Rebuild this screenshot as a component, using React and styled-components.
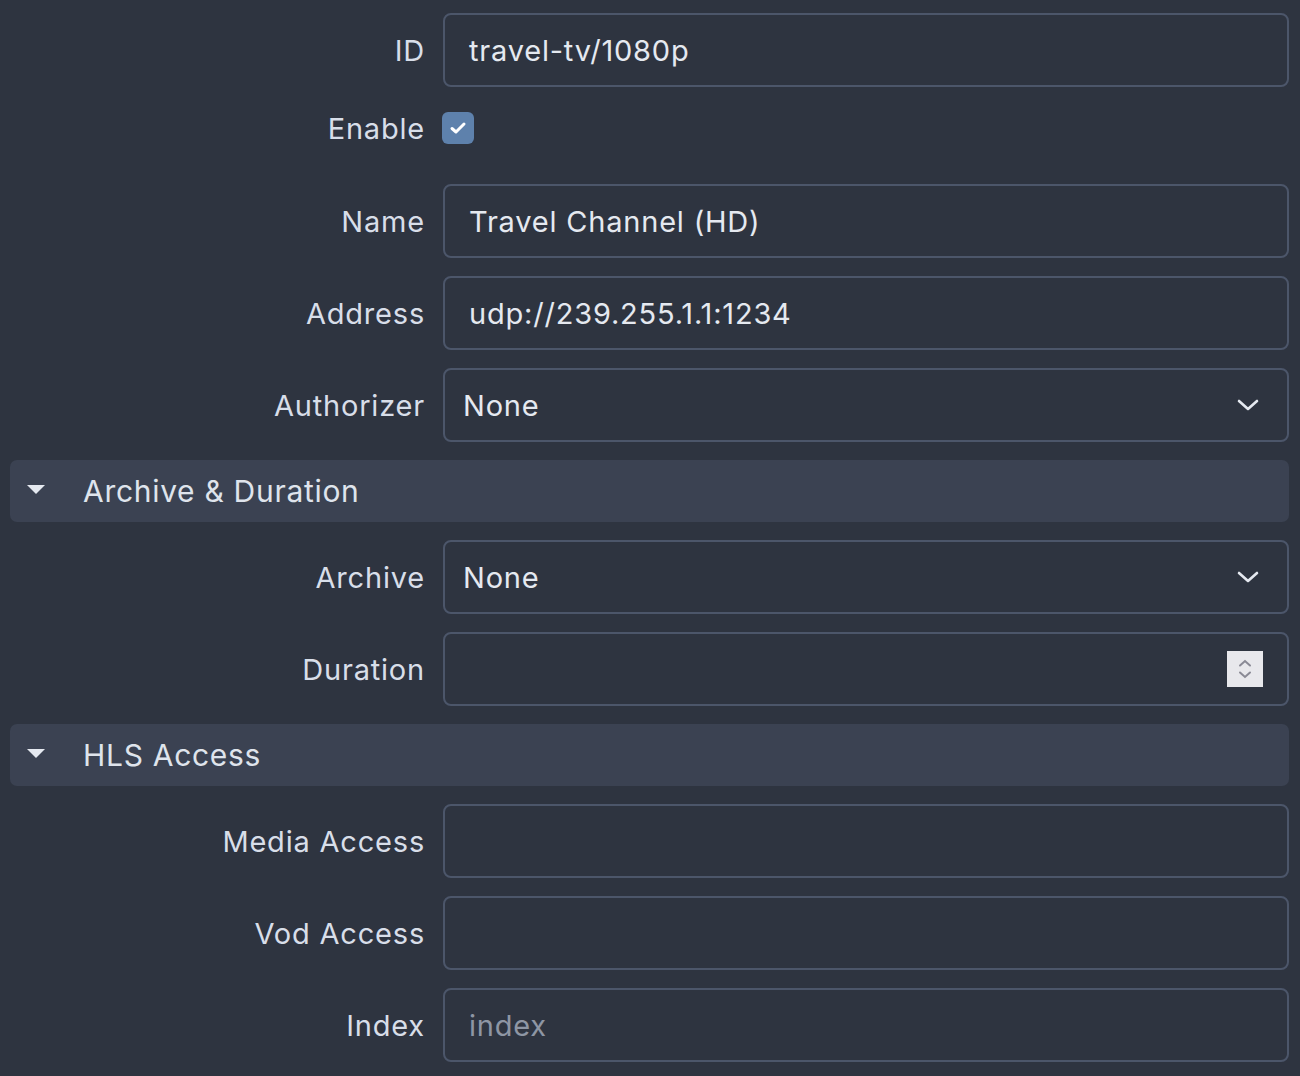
import React from 'react'
import styled, { createGlobalStyle } from 'styled-components'

const Global = createGlobalStyle`
  html, body {
    margin: 0;
    padding: 0;
    background: #2e3440;
  }
  body {
    font-family: Inter, "Noto Sans", "Liberation Sans", sans-serif;
    color: #d8dee9;
  }
`

const Page = styled.div`
  box-sizing: border-box;
  width: 1300px;
  min-height: 1076px;
  padding: 13px 11px 0 10px;
  display: flex;
  flex-direction: column;
  gap: 18px;
`

const Row = styled.div`
  display: grid;
  grid-template-columns: 415px 1fr;
  column-gap: 18px;
  align-items: center;
  height: ${p => (p.$compact ? '46px' : '74px')};
  margin-bottom: ${p => (p.$compact ? '15px' : '0')};
`

const Label = styled.label`
  text-align: right;
  font-size: 29px;
  color: #d8dee9;
  letter-spacing: 0.8px;
`

const Field = styled.div`
  box-sizing: border-box;
  height: 74px;
  border: 2px solid #4c566a;
  border-radius: 8px;
  display: flex;
  align-items: center;
  padding: ${p => (p.$select ? '0 28px 0 18px' : '0 24px')};
  font-size: 29px;
  color: ${p => (p.$placeholder ? '#8e96a4' : '#e5e9f0')};
  letter-spacing: 0.8px;
`

const FieldText = styled.span`
  flex: 1;
`

const Check = styled.span`
  width: 32px;
  height: 32px;
  border-radius: 6px;
  background: #5e81ac;
  display: flex;
  align-items: center;
  justify-content: center;
  margin-left: -1px;
`

const Spinner = styled.span`
  width: 36px;
  height: 36px;
  background: #e8e8ec;
  display: flex;
  flex-direction: column;
  align-items: center;
  justify-content: center;
  gap: 4px;
`

const Section = styled.div`
  height: 62px;
  background: #3b4252;
  border-radius: 7px;
  display: flex;
  align-items: center;
  padding-left: 17px;
  font-size: 30px;
  color: #dfe4ec;
  letter-spacing: 0.7px;
`

const Caret = styled.span`
  width: 0;
  height: 0;
  border-left: 9px solid transparent;
  border-right: 9px solid transparent;
  border-top: 9px solid #e5e9f0;
  margin-right: 38px;
  margin-top: -4px;
`

const Chevron = () => (
  <svg width="22" height="14" viewBox="0 0 22 14">
    <path d="M2 3 L11 11 L20 3" fill="none" stroke="#e5e9f0" strokeWidth="2.6" strokeLinecap="round" strokeLinejoin="round" />
  </svg>
)

const Input = ({ label, value, placeholder }) => (
  <Row>
    <Label>{label}</Label>
    <Field $placeholder={!value && placeholder}>
      <FieldText>{value || placeholder}</FieldText>
    </Field>
  </Row>
)

const Select = ({ label, value }) => (
  <Row>
    <Label>{label}</Label>
    <Field $select>
      <FieldText>{value}</FieldText>
      <Chevron />
    </Field>
  </Row>
)

export default function App() {
  return (
    <>
      <Global />
      <Page>
        <Input label="ID" value="travel-tv/1080p" />
        <Row $compact>
          <Label>Enable</Label>
          <Check>
            <svg width="18" height="14" viewBox="0 0 18 14">
              <path d="M3 7.5 L7 11 L15 3" fill="none" stroke="#fff" strokeWidth="3" strokeLinecap="round" strokeLinejoin="round" />
            </svg>
          </Check>
        </Row>
        <Input label="Name" value="Travel Channel (HD)" />
        <Input label="Address" value="udp://239.255.1.1:1234" />
        <Select label="Authorizer" value="None" />
        <Section>
          <Caret />
          Archive &amp; Duration
        </Section>
        <Select label="Archive" value="None" />
        <Row>
          <Label>Duration</Label>
          <Field>
            <FieldText />
            <Spinner>
              <svg width="14" height="8" viewBox="0 0 14 8">
                <path d="M2 6.5 L7 2 L12 6.5" fill="none" stroke="#8a8a95" strokeWidth="2" strokeLinecap="round" />
              </svg>
              <svg width="14" height="8" viewBox="0 0 14 8">
                <path d="M2 1.5 L7 6 L12 1.5" fill="none" stroke="#8a8a95" strokeWidth="2" strokeLinecap="round" />
              </svg>
            </Spinner>
          </Field>
        </Row>
        <Section>
          <Caret />
          HLS Access
        </Section>
        <Input label="Media Access" />
        <Input label="Vod Access" />
        <Input label="Index" placeholder="index" />
      </Page>
    </>
  )
}
